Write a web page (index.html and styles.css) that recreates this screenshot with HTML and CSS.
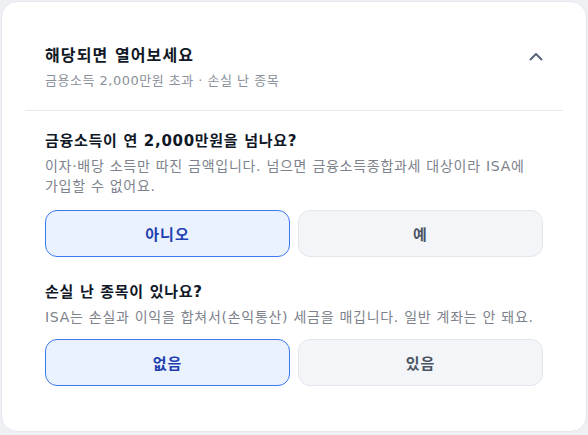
FILE: index.html
```html
<!DOCTYPE html>
<html lang="ko">
<head>
<meta charset="utf-8">
<link rel="stylesheet" href="styles.css">
</head>
<body>
<div class="card">
  <div class="header">
    <div class="header-text">
      <div class="title">해당되면 열어보세요</div>
      <div class="subtitle">금용소득 2,000만원 초과 · 손실 난 종목</div>
    </div>
    <svg class="chevron" width="14" height="9" viewBox="0 0 14 9" aria-hidden="true">
      <path d="M1.5 7.5 L7 2 L12.5 7.5" fill="none" stroke="#5a6478" stroke-width="2" stroke-linecap="round" stroke-linejoin="round"/>
    </svg>
  </div>
  <div class="body">
    <div class="question q1">
      <div class="q-title">금융소득이 연 2,000만원을 넘나요?</div>
      <div class="q-desc">이자·배당 소득만 따진 금액입니다. 넘으면 금융소득종합과세 대상이라 ISA에 가입할 수 없어요.</div>
      <div class="options">
        <button class="opt selected">아니오</button>
        <button class="opt">예</button>
      </div>
    </div>
    <div class="question q2">
      <div class="q-title">손실 난 종목이 있나요?</div>
      <div class="q-desc">ISA는 손실과 이익을 합쳐서(손익통산) 세금을 매깁니다. 일반 계좌는 안 돼요.</div>
      <div class="options">
        <button class="opt selected">없음</button>
        <button class="opt">있음</button>
      </div>
    </div>
  </div>
</div>
</body>
</html>
```

FILE: styles.css
```css
* { box-sizing: border-box; }
html, body {
  margin: 0;
  padding: 0;
  background: #eef0f4;
}
body {
  padding: 1px 1px 0 1px;
  font-family: "DejaVu Sans", "Noto Sans CJK KR", sans-serif;
}
.card {
  width: 586px;
  height: 431px;
  background: #ffffff;
  border: 1px solid #e4e7ec;
  border-radius: 16px;
  padding: 0 23px;
}
.header {
  display: flex;
  align-items: center;
  justify-content: space-between;
  padding: 42px 20px 19px 20px;
  border-bottom: 1px solid #e5e8ee;
}
.title {
  font-size: 16px;
  line-height: 24px;
  font-weight: 700;
  letter-spacing: 1.1px;
  color: #111827;
}
.subtitle {
  margin-top: 3px;
  font-size: 13px;
  line-height: 19.5px;
  letter-spacing: 0.5px;
  color: #8b919b;
}
.chevron {
  display: block;
  margin-top: -22px;
}
.body {
  padding: 19px 20px 0 20px;
}
.q2 {
  margin-top: 23.5px;
}
.q-title {
  font-size: 15px;
  line-height: 22px;
  font-weight: 700;
  letter-spacing: 0.7px;
  color: #111827;
}
.q-desc {
  margin-top: 5.5px;
  font-size: 14px;
  line-height: 19.5px;
  letter-spacing: 0.72px;
  color: #7d828c;
}
.options {
  display: grid;
  grid-template-columns: 1fr 1fr;
  gap: 8px;
  margin-top: 14px;
}
.q2 .options {
  margin-top: 11.5px;
}
.opt {
  height: 47px;
  border-radius: 12px;
  border: 1px solid #e3e6ec;
  background: #f3f5f9;
  font-family: "DejaVu Sans", "Noto Sans CJK KR", sans-serif;
  font-size: 15px;
  font-weight: 700;
  letter-spacing: 1px;
  color: #4b5563;
  padding: 0;
}
.opt.selected {
  border-color: #3b78f0;
  background: #ebf2ff;
  color: #1e40af;
}
```
